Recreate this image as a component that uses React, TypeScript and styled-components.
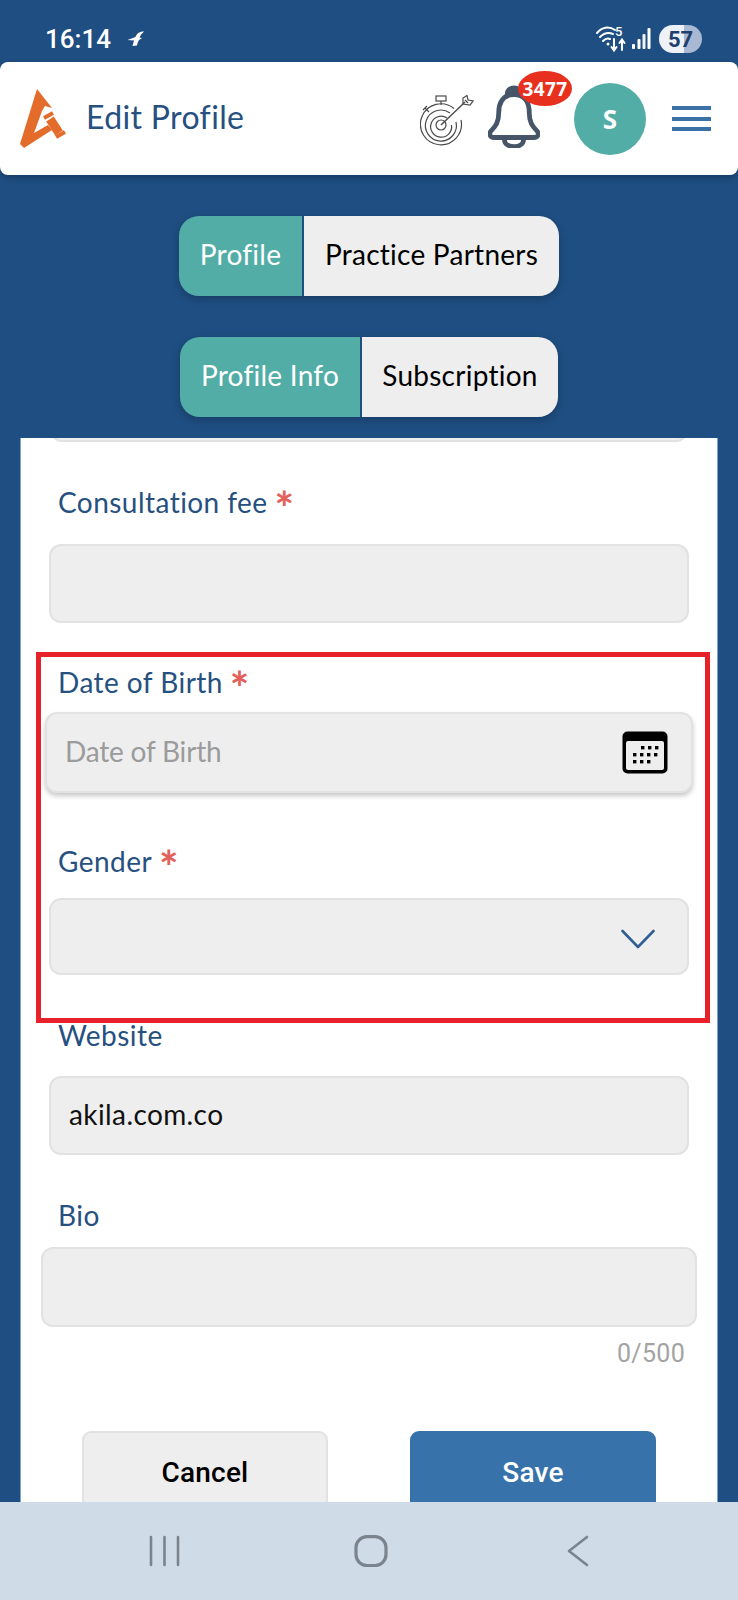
import React from "react";
import styled, { createGlobalStyle } from "styled-components";

const Global = createGlobalStyle`
  html, body { margin: 0; padding: 0; background: #1f4e82; }
  * { box-sizing: border-box; }
`;

const GILL = `Lato, "Open Sans", sans-serif`;

const Screen = styled.div`
  width: 738px;
  height: 1600px;
  background: #1f4e82;
  display: flex;
  flex-direction: column;
  overflow: hidden;
  font-family: ${GILL};
`;

const StatusBar = styled.div`
  height: 62px;
  flex: none;
  display: flex;
  align-items: center;
  padding: 16px 36px 0 45px;
  color: #fff;
`;
const Clock = styled.span`
  font-family: Roboto, sans-serif;
  font-weight: 500;
  font-size: 26px;
  margin-right: 16px;
`;
const StatusRight = styled.div`
  margin-left: auto;
  display: flex;
  align-items: center;
  gap: 6px;
`;
const Battery = styled.div`
  width: 43px;
  height: 28px;
  margin-left: 2px;
  border-radius: 14px;
  background: linear-gradient(90deg, #eef1f7 0 58%, #a9b8d3 58% 100%);
  color: #1f3f6d;
  font-family: Roboto, sans-serif;
  font-weight: 700;
  font-size: 22px;
  display: flex;
  align-items: center;
  justify-content: center;
`;

const Header = styled.header`
  height: 113px;
  flex: none;
  background: #fff;
  border-radius: 8px;
  box-shadow: 0 3px 6px rgba(0, 0, 0, 0.22);
  display: flex;
  align-items: center;
  padding: 0 27px 0 18px;
`;
const Title = styled.h1`
  margin: 0 0 4px 16px;
  font-family: ${GILL};
  font-weight: 400;
  font-size: 32px;
  letter-spacing: 0.35px;
  color: #26507f;
`;
const HeaderRight = styled.div`
  margin-left: auto;
  display: flex;
  align-items: center;
`;
const TargetSvg = styled.svg`
  width: 54px;
  height: 52px;
  margin-top: 4px;
`;
const BellWrap = styled.div`
  position: relative;
  width: 52px;
  height: 63px;
  margin: 0 0 4px 14px;
`;
const Badge = styled.span`
  position: absolute;
  left: 30px;
  top: -14px;
  width: 54px;
  height: 35px;
  border-radius: 50%;
  background: #e8301f;
  color: #fff;
  font-family: "Open Sans", sans-serif;
  font-weight: 700;
  font-size: 19px;
  letter-spacing: 0.4px;
  display: flex;
  align-items: center;
  justify-content: center;
`;
const Avatar = styled.div`
  width: 72px;
  height: 72px;
  margin-left: 34px;
  border-radius: 50%;
  background: #52ada6;
  color: #fff;
  font-family: "Open Sans", sans-serif;
  font-weight: 700;
  font-size: 26px;
  display: flex;
  align-items: center;
  justify-content: center;
`;
const Burger = styled.div`
  width: 39px;
  margin-left: 26px;
  display: flex;
  flex-direction: column;
  gap: 6.5px;
`;
const BurgerBar = styled.span`
  height: 4px;
  background: #3a72a8;
`;

const TabRow = styled.div`
  display: flex;
  justify-content: center;
  flex: none;
  margin-top: 41px;
`;
const TabGroup = styled.div`
  display: flex;
  height: 80px;
  border-radius: 20px;
  overflow: hidden;
  box-shadow: 0 3px 8px rgba(0, 0, 0, 0.22);
  background: #1f4e82;
  gap: 2px;
`;
const Tab = styled.div<{ $active?: boolean; $w: number }>`
  width: ${(p) => p.$w}px;
  background: ${(p) => (p.$active ? "#52ada6" : "#eeeeee")};
  color: ${(p) => (p.$active ? "#fff" : "#000")};
  font-size: 28px;
  letter-spacing: 0.25px;
  padding-bottom: 4px;
  display: flex;
  align-items: center;
  justify-content: center;
`;

const Card = styled.main`
  position: relative;
  flex: 1;
  min-height: 0;
  margin: 21px 21px 0;
  background: #fff;
  overflow: hidden;
  box-shadow: -1px 0 0 #7ea3cf, 1px 0 0 #7ea3cf;
`;
const ClippedInput = styled.div`
  height: 78px;
  margin: -74px 29px 0;
  background: #eeeeee;
  border: 2px solid #e2e2e2;
  border-radius: 12px;
`;
const Label = styled.div<{ $top: number; $gap: number }>`
  margin: ${(p) => p.$top}px 0 ${(p) => p.$gap}px 37px;
  height: 30px;
  line-height: 30px;
  padding-bottom: 3px;
  font-size: 28px;
  letter-spacing: 0.45px;
  color: #26507f;
  display: flex;
  align-items: center;
`;
const Star = styled.span`
  color: #e4605a;
  font-size: 46px;
  font-weight: 700;
  line-height: 30px;
  height: 30px;
  margin-left: 7px;
  position: relative;
  top: 6px;
`;
const Input = styled.div<{ $l?: number; $r?: number; $h?: number; $raised?: boolean; $pr?: number }>`
  height: ${(p) => p.$h ?? 79}px;
  margin: 0 ${(p) => p.$r ?? 28}px 0 ${(p) => p.$l ?? 28}px;
  background: #eeeeee;
  border: 2px solid #e2e2e2;
  border-radius: 12px;
  display: flex;
  align-items: center;
  justify-content: space-between;
  padding: 0 ${(p) => p.$pr ?? 18}px 3px 18px;
  font-size: 28px;
  letter-spacing: 0.4px;
  color: #111;
  box-shadow: ${(p) => (p.$raised ? "0 3px 5px rgba(0,0,0,0.22)" : "none")};
`;
const Placeholder = styled.span`
  color: #9b9b9b;
  letter-spacing: -0.2px;
`;
const CalendarSvg = styled.svg`
  width: 46px;
  height: 43px;
  margin-top: 2px;
`;
const ChevronSvg = styled.svg`
  width: 34px;
  height: 20px;
  margin-top: 8px;
`;
const Counter = styled.div`
  margin: 12px 32px 0 0;
  text-align: right;
  font-family: Roboto, sans-serif;
  font-size: 25px;
  letter-spacing: 0.3px;
  line-height: 30px;
  color: #a3a3a3;
`;
const Actions = styled.div`
  display: flex;
  gap: 82px;
  margin: 62px 0 0 61px;
`;
const ActionButton = styled.button<{ $primary?: boolean }>`
  width: 246px;
  height: 82px;
  border-radius: 9px;
  border: 2px solid ${(p) => (p.$primary ? "#3872ab" : "#e2e2e2")};
  background: ${(p) => (p.$primary ? "#3872ab" : "#eeeeee")};
  color: ${(p) => (p.$primary ? "#fff" : "#000")};
  font-family: Roboto, sans-serif;
  font-weight: 500;
  font-size: 28px;
  letter-spacing: 0.2px;
  padding: 0;
`;
const Annotation = styled.div`
  position: absolute;
  left: 15px;
  top: 214px;
  width: 674px;
  height: 371px;
  border: 5px solid #e8202a;
  pointer-events: none;
`;

const NavBar = styled.nav`
  height: 98px;
  flex: none;
  background: #cfdbe7;
  position: relative;
  z-index: 1;
  display: flex;
  align-items: flex-start;
  padding: 33px 0 0 149px;
`;

const Bird = () => (
  <svg width="18" height="16" viewBox="0 0 18 16" fill="#fff">
    <path d="M17 0.5 C13 0.5 10 2 8.5 6 L0.5 9 L7 9.5 L5.5 15 L10 14.5 C10.5 12 11 10.5 12 9 L15 7 L12.5 6.5 C13.5 4 15 2.5 17 0.5 Z" />
  </svg>
);

const WifiIcon = () => (
  <svg width="30" height="28" viewBox="0 0 30 28" fill="none" stroke="#fff" strokeLinecap="round">
    <path d="M1 8 C6 2 13 1 19 5" strokeWidth="2" />
    <path d="M4 12 C8 8 12 7 17 9" strokeWidth="2" />
    <path d="M7 16 C9 14 12 13 14 14" strokeWidth="2" />
    <circle cx="12" cy="19" r="1.5" fill="#fff" stroke="none" />
    <text x="19" y="11" fontFamily="Roboto, sans-serif" fontSize="13" fontWeight="500" fill="#fff" stroke="none">5</text>
    <path d="M18 14 V25 M15.5 22 L18 25.5 L20.5 22" strokeWidth="2" />
    <path d="M26 25 V15 M23.5 18 L26 14.5 L28.5 18" strokeWidth="2" />
  </svg>
);

const SignalIcon = () => (
  <svg width="19" height="22" viewBox="0 0 19 22" fill="#fff">
    <rect x="0" y="16" width="3" height="5" rx="1" />
    <rect x="5.5" y="11" width="3" height="10" rx="1" />
    <rect x="10.5" y="6" width="3" height="15" rx="1" opacity="0.95" />
    <rect x="15.5" y="0" width="3" height="21" rx="1" />
  </svg>
);

const Logo = () => (
  <svg width="52" height="62" viewBox="8 8 52 62" fill="#e36c2b">
    <path d="M27 9 L42 28 L35 26 L32 31 L24 53 L31 49 L38 45 L42 50 L14 68 L10 64 Z" />
    <path d="M34 38 L43 33 M46 57 L55 52" stroke="#e36c2b" strokeWidth="4" />
    <path d="M40 39 L49 53" stroke="#e36c2b" strokeWidth="9" />
  </svg>
);

const TargetIcon = () => (
  <TargetSvg viewBox="0 0 54 52" fill="none" stroke="#4a4a4a" strokeWidth="1.2">
    <rect x="16" y="1" width="10" height="5" />
    <path d="M21 6 V10" />
    <path d="M5 13 L9 17 M3 15 L7 11" />
    <path d="M34 13.5 A20.5 20.5 0 1 0 41 25" />
    <path d="M30 18 A15.5 15.5 0 1 0 36 27" />
    <path d="M27 23 A10.5 10.5 0 1 0 31.5 30" />
    <circle cx="21" cy="30" r="5" />
    <path d="M21 30 L45 7" strokeWidth="1.4" />
    <path d="M43 9 L43 3 L47 0.5 L48 5 L53 6 L50 10 L43 9 Z" />
    <path d="M45 5 L48 8" />
  </TargetSvg>
);

const BellIcon = () => (
  <svg width="52" height="63" viewBox="2 0 54 66" fill="none" stroke="#475569" strokeWidth="5" strokeLinejoin="round" strokeLinecap="round">
    <path d="M29 10 C17 10 13 19 13 29 C13 39 10 43 5 48 C2 51 4 55 8 55 H50 C54 55 56 51 53 48 C48 43 45 39 45 29 C45 19 41 10 29 10 Z" />
    <path d="M22 9 C22 1 36 1 36 9" fill="#475569" />
    <path d="M19 57 C19 67 39 67 39 57" />
  </svg>
);

const CalendarIcon = () => (
  <CalendarSvg viewBox="0 0 46 43">
    <rect x="0.5" y="0.5" width="45" height="42" rx="5" fill="#000" />
    <rect x="4" y="10" width="38" height="29" rx="2" fill="#eeeeee" />
    <g fill="#000">
      {[19, 26, 33].map((x) => <rect key={x} x={x} y="15" width="3.4" height="3.4" />)}
      {[11, 18, 25, 32].map((x) => <rect key={x} x={x} y="22" width="3.4" height="3.4" />)}
      {[11, 18, 25].map((x) => <rect key={x} x={x} y="29" width="3.4" height="3.4" />)}
    </g>
  </CalendarSvg>
);

const Chevron = () => (
  <ChevronSvg viewBox="0 0 34 20" fill="none" stroke="#2f5f93" strokeWidth="2.6" strokeLinecap="round" strokeLinejoin="round">
    <path d="M1.5 2 L17 18 L32.5 2" />
  </ChevronSvg>
);

const NavRecents = styled.svg`
  width: 31px;
  height: 32px;
`;
const NavHome = styled.svg`
  width: 34px;
  height: 32px;
  margin-left: 174px;
`;
const NavBack = styled.svg`
  width: 22px;
  height: 32px;
  margin-left: 179px;
`;

export default function App() {
  return (
    <Screen>
      <Global />
      <StatusBar>
        <Clock>16:14</Clock>
        <Bird />
        <StatusRight>
          <WifiIcon />
          <SignalIcon />
          <Battery>57</Battery>
        </StatusRight>
      </StatusBar>

      <Header>
        <Logo />
        <Title>Edit Profile</Title>
        <HeaderRight>
          <TargetIcon />
          <BellWrap>
            <BellIcon />
            <Badge>3477</Badge>
          </BellWrap>
          <Avatar>S</Avatar>
          <Burger>
            <BurgerBar />
            <BurgerBar />
            <BurgerBar />
          </Burger>
        </HeaderRight>
      </Header>

      <TabRow>
        <TabGroup>
          <Tab $active $w={123}>Profile</Tab>
          <Tab $w={255}>Practice Partners</Tab>
        </TabGroup>
      </TabRow>
      <TabRow>
        <TabGroup>
          <Tab $active $w={180}>Profile Info</Tab>
          <Tab $w={196}>Subscription</Tab>
        </TabGroup>
      </TabRow>

      <Card>
        <ClippedInput />
        <Label $top={46} $gap={26}>Consultation fee<Star>*</Star></Label>
        <Input />
        <Label $top={45} $gap={14}>Date of Birth<Star>*</Star></Label>
        <Input $l={24} $r={24} $h={81} $raised $pr={23}>
          <Placeholder>Date of Birth</Placeholder>
          <CalendarIcon />
        </Input>
        <Label $top={54} $gap={21}>Gender<Star>*</Star></Label>
        <Input $h={77} $pr={32}>
          <span />
          <Chevron />
        </Input>
        <Label $top={46} $gap={25}>Website</Label>
        <Input $h={79}>akila.com.co</Input>
        <Label $top={46} $gap={16}>Bio</Label>
        <Input $l={20} $r={20} $h={80} />
        <Counter>0/500</Counter>
        <Actions>
          <ActionButton>Cancel</ActionButton>
          <ActionButton $primary>Save</ActionButton>
        </Actions>
        <Annotation />
      </Card>

      <NavBar>
        <NavRecents viewBox="0 0 31 32" fill="none" stroke="#7b848c" strokeWidth="2.6" strokeLinecap="round">
          <path d="M2 2 V30 M15.5 2 V30 M29 2 V30" />
        </NavRecents>
        <NavHome viewBox="0 0 34 32" fill="none" stroke="#7b848c" strokeWidth="3.2">
          <rect x="2" y="1.6" width="30" height="29" rx="11" />
        </NavHome>
        <NavBack viewBox="0 0 22 32" fill="none" stroke="#7b848c" strokeWidth="2.6" strokeLinecap="round" strokeLinejoin="round">
          <path d="M20 2 L2 16 L20 30" />
        </NavBack>
      </NavBar>
    </Screen>
  );
}
